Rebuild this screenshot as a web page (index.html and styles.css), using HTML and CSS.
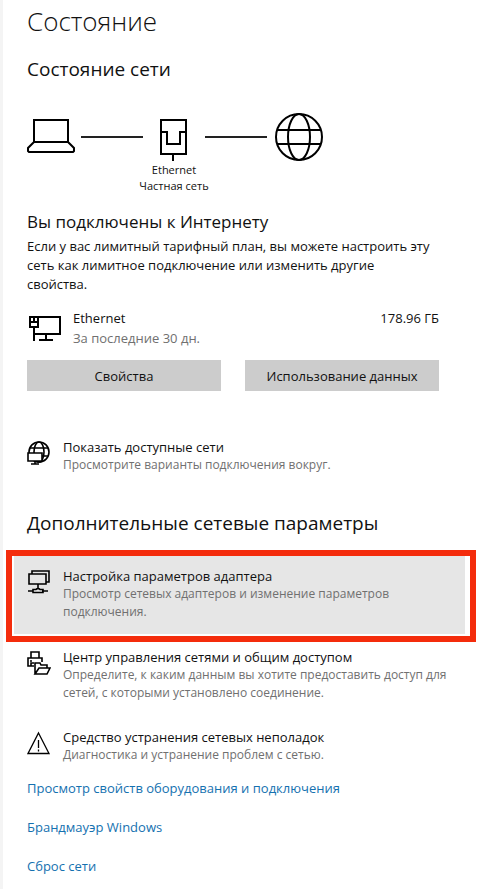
FILE: index.html
```
<!doctype html>
<html lang="ru">

<head>
  <meta charset="utf-8">
  <meta name="viewport" content="width=device-width, initial-scale=1">
  <title>Состояние</title>
  <link rel="stylesheet" href="styles.css">
</head>

<body>
  <main class="page">
    <h1>Состояние</h1>
    <h2 class="network-title">Состояние сети</h2>

    <div class="diagram">
      <svg class="node-icon" viewBox="0 0 48 48">
        <path d="M7 7h34v22H7zM7 29L1 35v3l1 1h44l1-1v-3l-6-6" />
      </svg>
      <div class="wire"></div>
      <div class="node">
        <svg class="node-icon" viewBox="0 0 48 48">
          <path d="M11 7h25v34H11zM11 19h6v12h13V19h6M23 41v7" />
        </svg>
        <span>Ethernet</span>
        <span>Частная сеть</span>
      </div>
      <div class="wire"></div>
      <svg class="node-icon" viewBox="0 0 48 48">
        <circle cx="24" cy="24" r="23" />
        <ellipse cx="24" cy="24" rx="11" ry="23" />
        <path d="M2 17h44M2 31h44" />
      </svg>
    </div>

    <section class="connection">
      <h3>Вы подключены к Интернету</h3>
      <p class="about">Если у вас лимитный тарифный план, вы можете настроить эту сеть как лимитное подключение или изменить другие свойства.</p>
      <div class="usage">
        <svg class="usage-icon" viewBox="0 0 34 26">
          <path d="M11 2h22v17H7M3 2h8v10H3zM3 7h8M7 3v4M7 12v14M19 19v6M12 25h14" />
        </svg>
        <div class="usage-name">
          <div>Ethernet</div>
          <div class="muted">За последние 30 дн.</div>
        </div>
        <div>178.96 ГБ</div>
      </div>
      <div class="buttons">
        <button type="button">Свойства</button>
        <button type="button">Использование данных</button>
      </div>
    </section>

    <a class="option show-networks" href="#networks">
      <svg class="option-icon" viewBox="0 0 24 24">
        <circle cx="12" cy="11" r="10" />
        <ellipse cx="12" cy="11" rx="5" ry="10" />
        <path d="M3 7h18M3 15h18" />
        <path class="screen" d="M1 12h14v8H1z" />
        <path d="M8 20v3M4 23h8" />
      </svg>
      <span>
        <span class="name">Показать доступные сети</span>
        <span class="muted">Просмотрите варианты подключения вокруг.</span>
      </span>
    </a>

    <h2 class="more-title">Дополнительные сетевые параметры</h2>

    <div class="frame">
      <a class="option" href="#adapter">
        <svg class="option-icon" viewBox="0 0 24 24">
          <path d="M2 4h17v10H2zM5 4V1h17v11h-3M11 14v4M1 21h5M15 21h6M6 22.500v-3h3l2-1.500 2 1.500h3v3z" />
        </svg>
        <span>
          <span class="name">Настройка параметров адаптера</span>
          <span class="muted">Просмотр сетевых адаптеров и изменение параметров подключения.</span>
        </span>
      </a>
    </div>

    <a class="option sharing" href="#sharing">
      <svg class="option-icon" viewBox="0 0 24 24">
        <path d="M4 7V1h8v6M4 15H1V7h14v4M3 10h2M7 15H4v-3h3M8 23V12h5l1 2h6v3M8 23l4-6h11l-3 6z" />
      </svg>
      <span>
        <span class="name">Центр управления сетями и общим доступом</span>
        <span class="muted">Определите, к каким данным вы хотите предоставить доступ для сетей, с которыми установлено соединение.</span>
      </span>
    </a>

    <a class="option troubleshoot" href="#troubleshoot">
      <svg class="option-icon" viewBox="0 0 24 24">
        <path d="M11.500 2L22 22.500H1zM11.500 9v8M11.500 18.500v2" />
      </svg>
      <span>
        <span class="name">Средство устранения сетевых неполадок</span>
        <span class="muted">Диагностика и устранение проблем с сетью.</span>
      </span>
    </a>

    <nav class="links">
      <a href="#hardware">Просмотр свойств оборудования и подключения</a>
      <a href="#firewall">Брандмауэр Windows</a>
      <a href="#reset">Сброс сети</a>
    </nav>
  </main>
</body>

</html>
```
FILE: styles.css
```
* {
  box-sizing: border-box;
}

body {
  margin: 0;
  background: #fff;
  color: #111;
  font: 13px/18px "Segoe UI", "Open Sans", "Noto Sans", sans-serif;
}

.page {
  min-height: 100vh;
  padding: 3px 12px 12px 24px;
  border-left: 3px solid #f4f4f4;
}

h1,
h2,
h3,
p {
  margin: 0;
  font-weight: 400;
}

h1 {
  font-size: 26px;
  font-weight: 300;
  line-height: 36px;
}

h2 {
  font-size: 19px;
  line-height: 24px;
}

h3 {
  font-size: 17px;
  line-height: 24px;
}

svg {
  display: block;
  flex: none;
  fill: none;
  stroke: #000;
}

.muted {
  color: #707070;
}

.network-title {
  margin-top: 18px;
}

/* computer - adapter - internet */
.diagram {
  display: flex;
  margin-top: 32px;
}

.node-icon {
  width: 48px;
  height: 48px;
  stroke-width: 2;
}

.wire {
  width: 62px;
  height: 2px;
  margin: 23px 6px 0;
  background: #222;
}

.node {
  display: flex;
  flex-direction: column;
  align-items: center;
  width: 50px;
  font-size: 11px;
  line-height: 16px;
  white-space: nowrap;
}

.node .node-icon {
  margin-bottom: 1px;
}

.wire + .node-icon {
  margin-left: 2px;
}

.connection {
  max-width: 412px;
  margin-top: 16px;
}

.about {
  margin-top: 3px;
  padding-right: 8px;
  line-height: 19px;
}

.usage {
  display: flex;
  margin-top: 14px;
  line-height: 20px;
}

.usage-icon {
  width: 34px;
  height: 26px;
  margin: 7px 12px 0 0;
  stroke-width: 2;
}

.usage-name {
  flex: 1;
}

.buttons {
  display: grid;
  grid-template-columns: 1fr 1fr;
  gap: 24px;
  margin-top: 12px;
}

button {
  height: 31px;
  padding: 0;
  border: 0;
  background: #ccc;
  color: #111;
  font: inherit;
}

.option {
  display: flex;
  gap: 12px;
  color: inherit;
  text-decoration: none;
}

.option-icon {
  width: 24px;
  height: 24px;
  margin-top: 3px;
  stroke-width: 1.6;
}

.screen {
  fill: #fff;
}

.name,
.option .muted {
  display: block;
}

.option .muted {
  font-size: 12px;
}

.show-networks {
  margin-top: 47px;
}

.more-title {
  margin-top: 37px;
}

/* red outline round the adapter settings */
.frame {
  margin: 15px 0 0 -21px;
  padding: 0 5px 2px 2px;
  border: 6px solid #f42c0c;
}

.frame .option {
  padding: 11px 12px 13px 13px;
  background: #e6e6e6;
}

.sharing {
  margin-top: 6px;
}

.troubleshoot {
  margin-top: 26px;
}

.troubleshoot .option-icon {
  stroke-width: 1.3;
}

.links {
  display: flex;
  flex-direction: column;
  align-items: flex-start;
  gap: 21px;
  margin-top: 15px;
}

.links a {
  color: #1571b0;
  text-decoration: none;
}
```
